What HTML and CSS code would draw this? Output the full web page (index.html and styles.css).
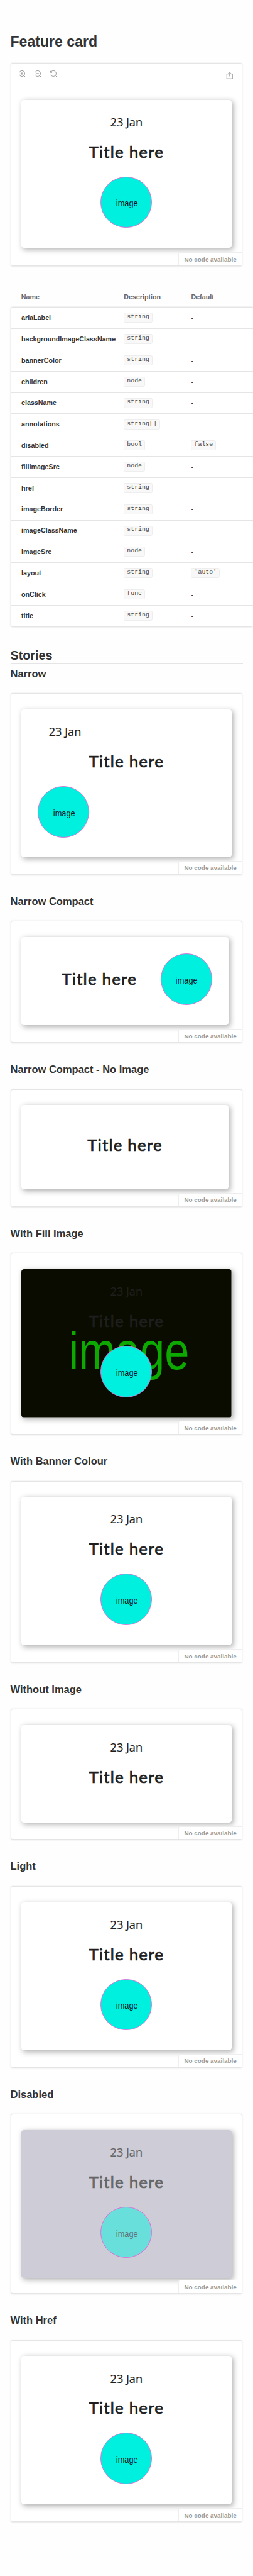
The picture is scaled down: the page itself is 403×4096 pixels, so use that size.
FILE: index.html
```html
<!DOCTYPE html>
<html lang="en">
<head>
<meta charset="utf-8">
<title>Feature card</title>
<link rel="stylesheet" href="styles.css">
</head>
<body>
<main class="page">
  <h1 class="title">Feature card</h1>
  <section class="preview preview-main">
    <div class="toolbar">
      <div class="tools">
        <svg class="icon" viewBox="0 0 14 14"><circle cx="6" cy="6" r="5.5"/><path d="M10 10l3.6 3.6M6 3.4v5.2M3.4 6h5.2"/></svg>
        <svg class="icon" viewBox="0 0 14 14"><circle cx="6" cy="6" r="5.5"/><path d="M10 10l3.6 3.6M3.4 6h5.2"/></svg>
        <svg class="icon" viewBox="0 0 14 14"><path d="M.5 1v3h3M1 3.6A5.5 5.5 0 1 1 1 8.300M10 10l3.600 3.600"/></svg>
      </div>
      <svg class="icon icon-share" viewBox="0 0 14 14"><path d="M4.500 4.500H1.500v9h11v-9h-3M7 9V1M4.500 3.300L7 .8l2.500 2.500"/></svg>
    </div>
    <article class="card"><p class="date">23 Jan</p><h2 class="name">Title here</h2><div class="badge"><span>image</span></div></article>
    <span class="nocode">No code available</span>
  </section>

  <table class="args">
    <thead><tr><th>Name</th><th>Description</th><th>Default</th></tr></thead>
    <tbody>
      <tr><td>ariaLabel</td><td><code>string</code></td><td>-</td></tr>
      <tr><td>backgroundImageClassName</td><td><code>string</code></td><td>-</td></tr>
      <tr><td>bannerColor</td><td><code>string</code></td><td>-</td></tr>
      <tr><td>children</td><td><code>node</code></td><td>-</td></tr>
      <tr><td>className</td><td><code>string</code></td><td>-</td></tr>
      <tr><td>annotations</td><td><code class="low">string[]</code></td><td>-</td></tr>
      <tr><td>disabled</td><td><code>bool</code></td><td><code>false</code></td></tr>
      <tr><td>fillImageSrc</td><td><code>node</code></td><td>-</td></tr>
      <tr><td>href</td><td><code>string</code></td><td>-</td></tr>
      <tr><td>imageBorder</td><td><code>string</code></td><td>-</td></tr>
      <tr><td>imageClassName</td><td><code>string</code></td><td>-</td></tr>
      <tr><td>imageSrc</td><td><code>node</code></td><td>-</td></tr>
      <tr><td>layout</td><td><code>string</code></td><td><code>'auto'</code></td></tr>
      <tr><td>onClick</td><td><code>func</code></td><td>-</td></tr>
      <tr><td>title</td><td><code>string</code></td><td>-</td></tr>
    </tbody>
  </table>

  <h2 class="stories">Stories</h2>

  <h3 class="story first">Narrow</h3>
  <section class="preview h350">
    <article class="card narrow"><p class="date">23 Jan</p><h2 class="name">Title here</h2><div class="badge"><span>image</span></div></article>
    <span class="nocode">No code available</span>
  </section>

  <h3 class="story">Narrow Compact</h3>
  <section class="preview h235">
    <article class="card compact"><h2 class="name">Title here</h2><div class="badge"><span>image</span></div></article>
    <span class="nocode">No code available</span>
  </section>

  <h3 class="story">Narrow Compact - No Image</h3>
  <section class="preview h227">
    <article class="card compact bare"><h2 class="name">Title here</h2></article>
    <span class="nocode">No code available</span>
  </section>

  <h3 class="story">With Fill Image</h3>
  <section class="preview h350">
    <article class="card fill">
      <svg class="fill-image" viewBox="0 0 407 285" preserveAspectRatio="none"><rect width="407" height="285" fill="#0a0c00"/><text class="img-text" transform="translate(208.500 192.700) scale(.84 1)" text-anchor="middle" font-size="102" fill="#0caa00">image</text></svg>
      <p class="date">23 Jan</p><h2 class="name">Title here</h2><div class="badge"><span>image</span></div>
    </article>
    <span class="nocode">No code available</span>
  </section>

  <h3 class="story">With Banner Colour</h3>
  <section class="preview h351">
    <article class="card"><p class="date">23 Jan</p><h2 class="name">Title here</h2><div class="badge"><span>image</span></div></article>
    <span class="nocode">No code available</span>
  </section>

  <h3 class="story">Without Image</h3>
  <section class="preview h252">
    <article class="card imageless"><p class="date">23 Jan</p><h2 class="name">Title here</h2></article>
    <span class="nocode">No code available</span>
  </section>

  <h3 class="story">Light</h3>
  <section class="preview h350">
    <article class="card"><p class="date">23 Jan</p><h2 class="name">Title here</h2><div class="badge"><span>image</span></div></article>
    <span class="nocode">No code available</span>
  </section>

  <h3 class="story">Disabled</h3>
  <section class="preview h347">
    <article class="card disabled"><p class="date">23 Jan</p><h2 class="name">Title here</h2><div class="badge"><span>image</span></div></article>
    <span class="nocode">No code available</span>
  </section>

  <h3 class="story">With Href</h3>
  <section class="preview h351">
    <article class="card"><p class="date">23 Jan</p><h2 class="name">Title here</h2><div class="badge"><span>image</span></div></article>
    <span class="nocode">No code available</span>
  </section>
</main>
</body>
</html>
```
FILE: styles.css
```css
* { box-sizing: border-box; }
html { background: #fefefe; overflow: hidden; }
body { margin: 0; zoom: .825; font-family: "Liberation Sans", Arial, sans-serif; color: #333; }
.page { width: 488px; height: 4964px; padding: 64px 20px 0; }
h1, h2, h3, p { margin: 0; }

.title { font-size: 28px; line-height: 32px; }
.preview {
  position: relative;
  padding: 30px 20px;
  margin-bottom: 40px;
  width: 448px;
  background: #fff;
  border: 1px solid #e5e5e5;
  border-radius: 4px;
  box-shadow: 0 1px 3px rgba(0, 0, 0, .1);
}
.preview-main { height: 392px; margin-top: 25px; padding-top: 0; }
.h350 { height: 350px; }
.h351 { height: 351px; }
.h347 { height: 347px; }
.h252 { height: 252px; }
.h235 { height: 235px; }
.h227 { height: 227px; }

.toolbar {
  display: flex;
  justify-content: space-between;
  height: 40px;
  margin: 0 -20px 30px;
  padding: 13px 16px 0 15.5px;
  border-bottom: 1px solid #e5e5e5;
}
.tools { display: flex; gap: 16px; }
.icon { width: 14px; height: 14px; fill: none; stroke: #999; stroke-width: 1.2; }
.icon-share { margin-top: 3px; }

.nocode {
  position: absolute;
  right: 0;
  bottom: 0;
  padding: 4px 10px;
  font-size: 12px;
  font-weight: 700;
  line-height: 16px;
  color: #999;
  background: #fff;
  border: solid #eee;
  border-width: 1px 0 0 1px;
  border-radius: 4px 0 0 0;
}

.card {
  position: relative;
  display: flex;
  flex-direction: column;
  align-items: center;
  height: 285.500px;
  padding-top: 28px;
  border-radius: 5px;
  background: #fff;
  color: #1e1e1e;
  box-shadow: 3px 3px 10px rgba(30, 30, 30, .35);
}
.date { position: relative; font-family: "Open Sans", "Noto Sans", sans-serif; font-size: 22px; line-height: 30px; font-weight: 500; -webkit-text-stroke: .3px; }
.name { position: relative; margin-top: 22px; font-family: Lato, "Open Sans", sans-serif; font-size: 31.500px; line-height: 40px; font-weight: 400; -webkit-text-stroke: .9px; letter-spacing: 1.400px; white-space: nowrap; }
.badge { position: relative; display: flex; align-items: center; justify-content: center; width: 99px; height: 99px; margin-top: 28px; border: 2px solid #da70d6; border-radius: 50%; background: #00f0e0; }
.badge span { padding: 5px 0 0 2px; font-size: 18.500px; line-height: 22px; color: #001a2a; transform: scaleX(.84); }
.img-text { font-family: "Liberation Sans", Arial, sans-serif; }

.narrow .date { align-self: flex-start; margin-left: 53px; }
.narrow .badge { align-self: flex-start; margin-left: 32px; }
.compact { flex-direction: row; align-items: flex-start; width: 400px; height: 170px; padding: 32px 32px 0 78px; justify-content: space-between; }
.compact .name { margin-top: 28px; }
.compact .badge { margin-top: 0; }
.bare { height: 162px; justify-content: center; padding: 28px 0 0; }
.imageless { height: 187px; }
.fill-image { position: absolute; inset: 0; width: 100%; height: 100%; border-radius: 5px; }
.disabled { background: #cdccd7; color: #666; }
.disabled .badge { border-color: #dd6ed8; background: #69dfdb; }
.disabled .badge span { color: #5f7379; }

.args { width: 468px; border-collapse: separate; border-spacing: 0; font-size: 13px; line-height: 20px; table-layout: fixed; }
.args th { height: 39px; padding: 9px 0 0 21px; text-align: left; vertical-align: top; color: #666; }
.args th:first-child { width: 198px; }
.args th:nth-child(2) { width: 130px; }
.args td { height: 41px; padding: 0 0 1px 21px; background: #fff; border-top: 1px solid #e5e5e5; }
.args td:first-child { font-weight: 700; border-left: 1px solid #e5e5e5; padding-left: 20px; }
.args tbody { box-shadow: 0 1px 3px rgba(0, 0, 0, .15); border-radius: 4px; }
.args tbody tr:first-child td:first-child { border-top-left-radius: 4px; }
.args tbody tr:last-child td:first-child { border-bottom-left-radius: 4px; }
.args code {
  display: block;
  width: fit-content;
  padding: 1px 5px 4px;
  font: 12px/12px "Liberation Mono", monospace;
  color: #444;
  background: #f8f8f8;
  border: 1px solid #eee;
  border-radius: 3px;
}
.args .low { margin-top: 2px; }

.stories { width: 449px; margin-top: 40px; font-size: 24px; line-height: 32px; border-bottom: 1px solid #e5e5e5; }
.story { font-size: 20px; line-height: 24px; margin-bottom: 25px; }
.first { margin-top: 7px; }
```
